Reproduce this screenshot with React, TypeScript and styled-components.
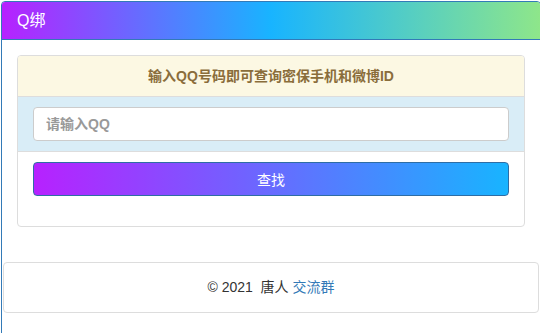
import styled, { createGlobalStyle } from 'styled-components';

const GlobalStyle = createGlobalStyle`
  html, body {
    margin: 0;
    padding: 0;
    background: #fff;
    overflow: hidden;
  }
  body {
    font-family: 'Liberation Sans', Arial, 'Noto Sans CJK SC', sans-serif;
    font-size: 14px;
    line-height: 1.42857;
    color: #333;
  }
  * {
    box-sizing: border-box;
  }
`;

const Page = styled.div`
  margin: 1px 0 0 1px;
  width: 540px;
  min-height: 340px;
  border: 1px solid #337ab7;
  border-radius: 4px;
`;

const TopBar = styled.div`
  padding: 10px 15px;
  height: 38px;
  border-bottom: 1px solid #337ab7;
  border-radius: 3px 3px 0 0;
  background: linear-gradient(90deg, #b721ff 0%, #18b4ff 50%, #8ee68a 100%);
  color: #fff;
  font-size: 16px;
  line-height: 17px;
`;

const Body = styled.div`
  padding: 15px 15px 15px;
`;

const Card = styled.div`
  border: 1px solid #ddd;
  border-radius: 4px;
  overflow: hidden;
`;

const Notice = styled.div`
  padding: 10px 15px;
  background: #fcf8e3;
  border-bottom: 1px solid #ddd;
  color: #8a6d3b;
  font-weight: bold;
  text-align: center;
  line-height: 20px;
`;

const InputRow = styled.div`
  padding: 10px 15px;
  background: #d9edf7;
  border-bottom: 1px solid #ddd;
`;

const Input = styled.input`
  display: block;
  width: 100%;
  height: 34px;
  padding: 6px 12px;
  border: 1px solid #ccc;
  border-radius: 4px;
  font-family: inherit;
  font-size: 14px;
  color: #555;
  outline: none;
  &::placeholder {
    color: #999;
    font-weight: bold;
  }
`;

const Actions = styled.div`
  padding: 10px 15px 30px;
`;

const SearchButton = styled.button`
  display: block;
  width: 100%;
  height: 34px;
  border: 1px solid #2e6da4;
  border-radius: 4px;
  background: linear-gradient(90deg, #b721ff 0%, #18b4ff 100%);
  color: #fff;
  font-family: inherit;
  font-size: 14px;
  cursor: pointer;
`;

const Footer = styled.div`
  margin: 20px 0 0 1px;
  width: 536px;
  height: 51px;
  border: 1px solid #ddd;
  border-radius: 4px;
  display: flex;
  align-items: center;
  justify-content: center;
  white-space: pre;
`;

const Link = styled.a`
  color: #337ab7;
  text-decoration: none;
`;

export default function App() {
  return (
    <>
      <GlobalStyle />
      <Page>
        <TopBar>Q绑</TopBar>
        <Body>
          <Card>
            <Notice>输入QQ号码即可查询密保手机和微博ID</Notice>
            <InputRow>
              <Input placeholder="请输入QQ" />
            </InputRow>
            <Actions>
              <SearchButton>查找</SearchButton>
            </Actions>
          </Card>
        </Body>
        <Footer>
          {'© 2021  唐人 '}
          <Link href="#">交流群</Link>
        </Footer>
      </Page>
    </>
  );
}
